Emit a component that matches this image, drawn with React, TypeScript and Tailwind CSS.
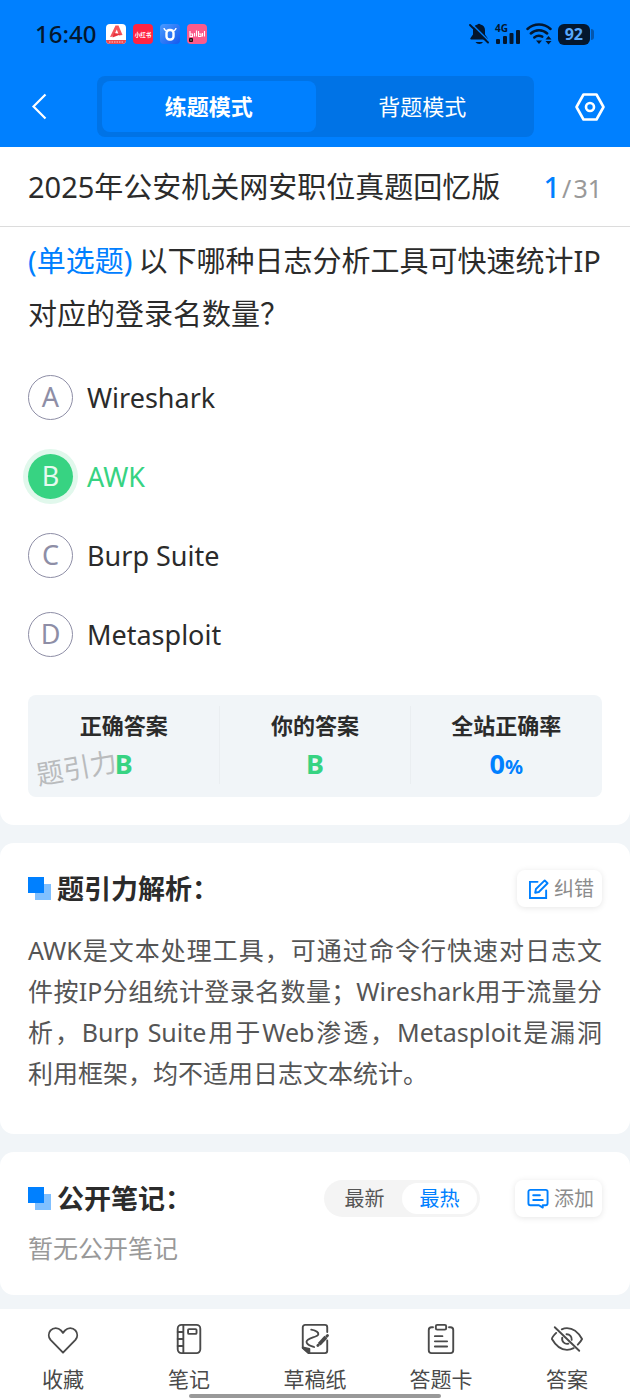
import { useState, type ReactNode } from "react";

const options = [
    { key: "A", text: "Wireshark" },
    { key: "B", text: "AWK" },
    { key: "C", text: "Burp Suite" },
    { key: "D", text: "Metasploit" },
];

const correctKey = "B";

// ===== STATUS BAR =====

function StatusBar() {
    return (
        <div className="flex items-center justify-between pt-[19px] pl-[35px] pr-9 text-[#04172e]">
            <div className="flex items-center gap-[10px]">
                <span className="text-[24px] leading-[30px] font-medium">16:40</span>
                <div className="flex items-center gap-[7px]">
                    <svg className="size-5" viewBox="0 0 20 20" aria-hidden="true">
                        <rect width="20" height="20" rx="4" fill="#fff" />
                        <path d="M0 16h20a4 4 0 0 1-4 4H4a4 4 0 0 1-4-4z" fill="#f04a4f" />
                        <path d="M4 13 9.500 1.500h3L16.500 11l-3.500.5-2.200-6L7.500 12.500z" fill="#f4555c" />
                        <path d="m8 9 7.500 1-9 3.500z" fill="#e8323c" />
                        <path d="M3 18h14" stroke="#fff" strokeOpacity=".7" strokeDasharray="1.5 1" />
                    </svg>
                    <svg className="size-5" viewBox="0 0 20 20" aria-hidden="true">
                        <rect width="20" height="20" rx="4" fill="#ff2442" />
                        <text x="10" y="12.500" fontSize="5.500" fontWeight="700" textAnchor="middle" fill="#fff">小红书</text>
                    </svg>
                    <svg className="size-5" viewBox="0 0 20 20" aria-hidden="true">
                        <defs>
                            <linearGradient id="ox" x1="0" y1="0" x2="1" y2="1">
                                <stop offset="0" stopColor="#4a9bff" />
                                <stop offset="1" stopColor="#1559ee" />
                            </linearGradient>
                        </defs>
                        <rect width="20" height="20" rx="4" fill="url(#ox)" />
                        <path d="M4 4c.2 1.600 1 2.500 2.500 2.500M16 4c-.2 1.600-1 2.500-2.500 2.500" fill="none" stroke="#fff" strokeWidth="1.400" />
                        <rect x="6.500" y="6" width="7" height="9.500" rx="3" fill="none" stroke="#fff" strokeWidth="2.400" />
                    </svg>
                    <svg className="size-5" viewBox="0 0 20 20" aria-hidden="true">
                        <rect width="20" height="20" rx="4" fill="#fb5b8b" />
                        <path d="M3 7v5.500h2.500V10H3M7.500 9v3.500M9.500 6.500v6M11.500 7v5.500H14V10h-2.500M15.500 9v3.500M17.500 7v5.500" fill="none" stroke="#fff" strokeWidth="1.100" />
                        <rect x="2" y="14" width="4" height="4" rx="1" fill="#1c0d14" />
                        <rect x="3.500" y="15.500" width="1" height="1" fill="#fff" />
                    </svg>
                </div>
            </div>

            <div className="flex items-center gap-[6px]">
                <svg className="w-5 h-[22px]" viewBox="0 0 20 22" fill="currentColor" aria-hidden="true">
                    <path d="M4 7.500a6 6 0 0 1 4.500-6 1.800 1.800 0 0 1 3 0 6 6 0 0 1 4.500 6v4l2.500 3.500c.4.600.2 1.500-.7 1.500H2.200c-.9 0-1.100-.9-.7-1.500L4 11.500z" />
                    <path d="M6.500 19h7.500c-.8 1.300-2 2-3.700 2s-3-.7-3.800-2z" />
                    <path d="m2.500 .8 17.500 17.200" stroke="#0080ff" strokeWidth="1.600" />
                    <path d="m1 2 18 17.500" stroke="currentColor" strokeWidth="1.900" strokeLinecap="round" />
                </svg>
                <svg className="w-[25px] h-[22px] overflow-visible" viewBox="0 0 25 22" fill="currentColor" aria-hidden="true">
                    <text x="0" y="9" fontSize="10" fontWeight="700">4G</text>
                    <rect x="1" y="16" width="4" height="5" rx="1" />
                    <rect x="8" y="13" width="4" height="8" rx="1" />
                    <rect x="14.500" y="10" width="4" height="11" rx="1" />
                    <rect x="21" y="7" width="4" height="14" rx="1" />
                </svg>
                <svg className="w-[26px] h-[22px]" viewBox="0 0 26 22" fill="none" stroke="currentColor" strokeWidth="2.500" strokeLinecap="round" aria-hidden="true">
                    <path d="M1.500 6a17 17 0 0 1 23 0" />
                    <path d="M4.800 10.500a12 12 0 0 1 16.400 0" />
                    <path d="M8.300 14.500a7.300 7.300 0 0 1 8-.8" />
                    <path d="M10 17.500h6L13 21z" fill="currentColor" stroke="none" />
                    <path d="M19.500 16.500h6L22.500 13zM19.500 18h6l-3 3.500z" fill="currentColor" stroke="none" />
                </svg>
                <div className="flex items-center gap-px">
                    <span className="rounded-[6px] bg-[#04172e] px-[7px] text-[16px] leading-[21px] font-bold text-[#58a8ff]">92</span>
                    <span className="h-[11px] w-[3px] rounded-r-full bg-[#0456ac]" />
                </div>
            </div>
        </div>
    );
}

// ===== SHARED PIECES =====

function SectionTitle({ children }: { children: ReactNode }) {
    return (
        <h2 className="flex flex-1 items-center gap-[6px] text-[27px] leading-[37px] font-bold text-[#2b2b2b]">
            <svg className="size-[23px]" viewBox="0 0 23 23" aria-hidden="true">
                <rect x="7" y="7" width="16" height="16" fill="#80c0ff" />
                <rect width="16" height="16" fill="#0080ff" />
            </svg>
            {children}
        </h2>
    );
}

function ActionButton({ icon, label }: { icon: ReactNode; label: string }) {
    return (
        <button
            type="button"
            className="flex h-[37px] items-center gap-[5px] rounded-lg bg-white pr-2 pl-3 text-[20px] leading-[37px] text-[#8c8c8c] shadow-[0_1px_6px_rgba(0,0,0,0.1)]"
        >
            {icon}
            {label}
        </button>
    );
}

const line = {
    fill: "none",
    stroke: "currentColor",
    strokeWidth: 2,
    strokeLinecap: "round",
    strokeLinejoin: "round",
} as const;

const navItems = [
    {
        label: "收藏",
        icon: <path d="M16 31 2.800 17.500a7.900 7.900 0 0 1 0-10.200 7.600 7.600 0 0 1 11 0L16 10l2.200-2.700a7.600 7.600 0 0 1 11 0 7.900 7.900 0 0 1 0 10.200z" />,
    },
    {
        label: "笔记",
        icon: (
            <>
                <rect x="4" y="1.500" width="24" height="30" rx="4" />
                <path d="M10 1.500v30M4 9h6M4 16.500h6M4 24h6" />
                <rect x="15" y="6" width="9" height="5" rx="1" />
            </>
        ),
    },
    {
        label: "草稿纸",
        icon: (
            <>
                <path d="M29 9V4a2.500 2.500 0 0 0-2.500-2.500h-21A2.500 2.500 0 0 0 3 4v22l6 5.500h17.500A2.500 2.500 0 0 0 29 29V18" />
                <path d="M3 25.500 10 27v4.500z" fill="currentColor" />
                <path d="M12 6.500c3 .5 8 2 7.500 5s-12.500 4-12.500 8 5 4 8 5.500" />
                <path d="m20.500 22 7-7.500" strokeWidth="4" strokeLinecap="butt" />
                <path d="m28.500 13.500.8-.8M19 23.500l.6-.6" strokeWidth="3" />
            </>
        ),
    },
    {
        label: "答题卡",
        icon: (
            <>
                <path d="M7.500 4H6a3 3 0 0 0-3 3v21.500a3 3 0 0 0 3 3h20a3 3 0 0 0 3-3V7a3 3 0 0 0-3-3h-1.500" />
                <rect x="10.500" y="1.500" width="11" height="5" rx="1.500" />
                <path d="M9.500 13.500h8M9.500 19h13M9.500 24.500h13" />
            </>
        ),
    },
    {
        label: "答案",
        icon: (
            <>
                <path d="M4.500 10C2 12.500 0 16 0 16.500 4 23.500 9.500 28 16 28c2.500 0 5-.7 7-1.800M10.500 6.200C12 5.500 14 5 16 5c6.500 0 12 4.500 16 11.500-1 2-2.500 4-4.500 6" />
                <path d="M11 15a5.300 5.300 0 0 0 6.500 6.500M15.500 11.500a5.300 5.300 0 0 1 5.500 6" />
                <path d="M3 4l26 25" />
            </>
        ),
    },
];

export default function App() {
    const [mode, setMode] = useState("练题模式");
    const [answer, setAnswer] = useState("B");
    const [sort, setSort] = useState("最热");

    return (
        <div className="flex min-h-screen flex-col bg-[#f1f5f8] font-['Noto_Sans','Noto_Sans_CJK_SC',sans-serif] text-[#2b2b2b]">
            <header className="bg-[#0080ff] pb-[10px]">
                <StatusBar />
                <div className="mt-[27px] flex items-center pr-[25px] pl-[31px]">
                    <button type="button" aria-label="返回" className="text-white">
                        <svg className="h-[27px] w-4" viewBox="0 0 16 27" fill="none" stroke="currentColor" strokeWidth="2.200" aria-hidden="true">
                            <path d="M14.500 1.500 2.500 13.500l12 12" />
                        </svg>
                    </button>
                    <div className="mr-[41px] ml-[50px] flex flex-1 rounded-lg bg-[#0073e6] p-[5px]">
                        {["练题模式", "背题模式"].map((m) => (
                            <button
                                key={m}
                                type="button"
                                aria-pressed={mode === m}
                                onClick={() => setMode(m)}
                                className={`flex-1 rounded-lg text-[22px] leading-[51px] text-white ${mode === m ? "bg-[#0080ff] font-bold" : ""}`}
                            >
                                {m}
                            </button>
                        ))}
                    </div>
                    <button type="button" aria-label="设置" className="text-white">
                        <svg className="h-7 w-[30px]" viewBox="0 0 30 28" fill="none" stroke="currentColor" strokeWidth="2.600" strokeLinejoin="round" aria-hidden="true">
                            <path d="M8.500 1.500h13L28.500 14l-7 12.500h-13L1.500 14z" />
                            <circle cx="15" cy="14" r="4" />
                        </svg>
                    </button>
                </div>
            </header>

            <div className="flex items-center justify-between border-b border-[#dcdcdc] bg-white px-7">
                <h1 className="text-[29px] leading-[79px]">2025年公安机关网安职位真题回忆版</h1>
                <p className="flex items-baseline gap-[2px] text-[25px] text-[#999]">
                    <span className="text-[29px] font-medium text-[#0080ff]">1</span>
                    <span>/</span>
                    <span>31</span>
                </p>
            </div>

            <main className="flex flex-1 flex-col gap-[18px]">
                <section className="rounded-b-[14px] bg-white px-7 pt-[7px] pb-7">
                    <p className="text-[29px] leading-[53px]">
                        <span className="mr-[6px] text-[#0080ff]">(单选题)</span>
                        以下哪种日志分析工具可快速统计IP对应的登录名数量？
                    </p>

                    <fieldset aria-label="选项" className="mt-[35px] flex flex-col gap-[34px]">
                        {options.map((o) => {
                            const right = o.key === correctKey;
                            return (
                                <label key={o.key} className={`flex items-center gap-[14px] text-[27px] ${right ? "text-[#37d382]" : ""}`}>
                                    <input
                                        type="radio"
                                        name="answer"
                                        className="sr-only"
                                        checked={answer === o.key}
                                        onChange={() => setAnswer(o.key)}
                                    />
                                    <span
                                        className={`flex size-[45px] items-center justify-center rounded-full ${
                                            right
                                                ? "bg-[#37d382] text-[#e6faef] ring-5 ring-[#e1f8ec]"
                                                : "border border-[#8e8ea6] text-[#8e8ea6]"
                                        }`}
                                    >
                                        {o.key}
                                    </span>
                                    <span className="leading-[45px]">{o.text}</span>
                                </label>
                            );
                        })}
                    </fieldset>

                    <div className="relative mt-[38px] rounded-lg bg-[#f1f5f8] pt-[11px] pb-[13px]">
                        {/* watermark lies under the numbers */}
                        <span className="absolute top-[53px] left-2 -rotate-10 text-[27px] leading-10 text-[#b9bbbd]">题引力</span>
                        <dl className="relative grid grid-cols-3 text-center font-bold">
                            <div>
                                <dt className="text-[22px] leading-[38px]">正确答案</dt>
                                <dd className="text-[27px] leading-10 text-[#37d382]">{correctKey}</dd>
                            </div>
                            <div className="border-x border-[#eaeef1]">
                                <dt className="text-[22px] leading-[38px]">你的答案</dt>
                                <dd className="text-[27px] leading-10 text-[#37d382]">{answer}</dd>
                            </div>
                            <div>
                                <dt className="text-[22px] leading-[38px]">全站正确率</dt>
                                <dd className="text-[27px] leading-10 text-[#0080ff]">
                                    0<span className="text-[20px] leading-none">%</span>
                                </dd>
                            </div>
                        </dl>
                    </div>
                </section>

                <section className="rounded-[14px] bg-white px-7 pt-[27px] pb-10">
                    <div className="flex items-center">
                        <SectionTitle>题引力解析：</SectionTitle>
                        <ActionButton
                            label="纠错"
                            icon={
                                <svg className="size-5 text-[#0080ff]" viewBox="3 1 21 21" {...line} strokeLinejoin="miter" aria-hidden="true">
                                    <path d="M12 4H4v17h17v-8" />
                                    <path d="m9.500 15.500.8-4L19.500 2.500l3 3-9.200 9.200z" strokeLinejoin="round" />
                                </svg>
                            }
                        />
                    </div>
                    <p className="mt-[23px] text-justify text-[25px] leading-[41px] text-[#555]">
                        AWK是文本处理工具，可通过命令行快速对日志文件按IP分组统计登录名数量；Wireshark用于流量分析，Burp Suite用于Web渗透，Metasploit是漏洞利用框架，均不适用日志文本统计。
                    </p>
                </section>

                <section className="rounded-[14px] bg-white px-7 pt-7 pb-[29px]">
                    <div className="flex items-center">
                        <SectionTitle>公开笔记：</SectionTitle>
                        <div className="mr-[35px] flex rounded-full bg-[#f4f4f4] p-[3px]">
                            {["最新", "最热"].map((s) => (
                                <button
                                    key={s}
                                    type="button"
                                    aria-pressed={sort === s}
                                    onClick={() => setSort(s)}
                                    className={`w-[75px] rounded-full text-[20px] leading-[31px] ${sort === s ? "bg-white text-[#0080ff]" : "text-[#555]"}`}
                                >
                                    {s}
                                </button>
                            ))}
                        </div>
                        <ActionButton
                            label="添加"
                            icon={
                                <svg className="size-[22px] text-[#0080ff]" viewBox="1 1 23 23" {...line} aria-hidden="true">
                                    <path d="M4.500 3h16a2 2 0 0 1 2 2v12a2 2 0 0 1-2 2h-3v2.500L13.500 19h-9a2 2 0 0 1-2-2V5a2 2 0 0 1 2-2z" />
                                    <path d="M7.500 8.500h7M7.500 13.500h10" />
                                </svg>
                            }
                        />
                    </div>
                    <p className="mt-[13px] text-[25px] leading-9 text-[#999]">暂无公开笔记</p>
                </section>
            </main>

            <nav className="relative mt-[14px] grid grid-cols-5 bg-white pt-[14px] pb-[6px]">
                {navItems.map((item) => (
                    <button key={item.label} type="button" className="flex flex-col items-center gap-[9px] text-[21px] leading-[30px] text-[#4a4a4a]">
                        <svg className="size-8" viewBox="-1 0 34 33" {...line} aria-hidden="true">
                            {item.icon}
                        </svg>
                        {item.label}
                    </button>
                ))}
                <span className="absolute bottom-[2px] left-1/2 h-1 w-2/5 -translate-x-1/2 rounded-full bg-[#999]" />
            </nav>
        </div>
    );
}
